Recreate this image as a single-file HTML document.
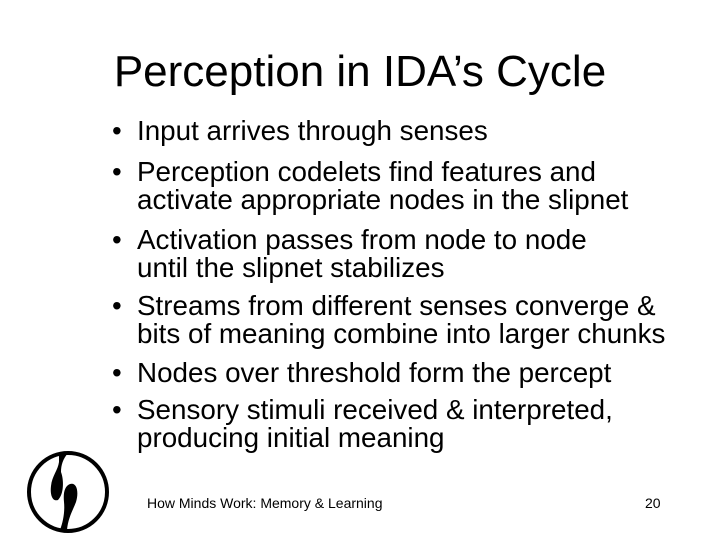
<html><head><style>
body{margin:0;width:720px;height:540px;background:#fff;position:relative;font-family:"Liberation Sans",sans-serif;color:#000;overflow:hidden}
.t{position:absolute;left:0;width:720px;text-align:center;top:46px;font-size:44px;line-height:52px}
.l{position:absolute;left:137px;font-size:27.8px;line-height:28px;white-space:nowrap}
.b{position:absolute;left:112px;font-size:27.8px;line-height:28px}
.f{position:absolute;top:494px;font-size:14px;line-height:18px}
</style></head><body>
<div class="t">Perception in IDA’s Cycle</div>
<div class="b" style="top:117px">•</div><div class="l" style="top:117px">Input arrives through senses</div>
<div class="b" style="top:158px">•</div><div class="l" style="top:158px">Perception codelets find features and<br>activate appropriate nodes in the slipnet</div>
<div class="b" style="top:226px">•</div><div class="l" style="top:226px">Activation passes from node to node<br>until the slipnet stabilizes</div>
<div class="b" style="top:292px">•</div><div class="l" style="top:292px">Streams from different senses converge &amp;<br>bits of meaning combine into larger chunks</div>
<div class="b" style="top:359px">•</div><div class="l" style="top:359px">Nodes over threshold form the percept</div>
<div class="b" style="top:396px">•</div><div class="l" style="top:396px">Sensory stimuli received &amp; interpreted,<br>producing initial meaning</div>
<div class="f" style="left:147px">How Minds Work: Memory &amp; Learning</div>
<div class="f" style="left:645px">20</div>
<svg style="position:absolute;left:0;top:0" width="720" height="540">
<circle cx="68" cy="492" r="39" fill="none" stroke="#000" stroke-width="4"/>
<path d="M59,453 L68,453 C63,459 61,465 61,472 C64,480 64,494 58,500 C52,502 50,494 51,486 C52,476 58,470 59,462 Z" fill="#000"/>
<path d="M70,484 C77,482 79,492 76,502 C73,510 68,518 67,530 L60,530 C63,522 65,512 64,502 C63,492 65,486 70,484 Z" fill="#000"/>
</svg>
</body></html>
